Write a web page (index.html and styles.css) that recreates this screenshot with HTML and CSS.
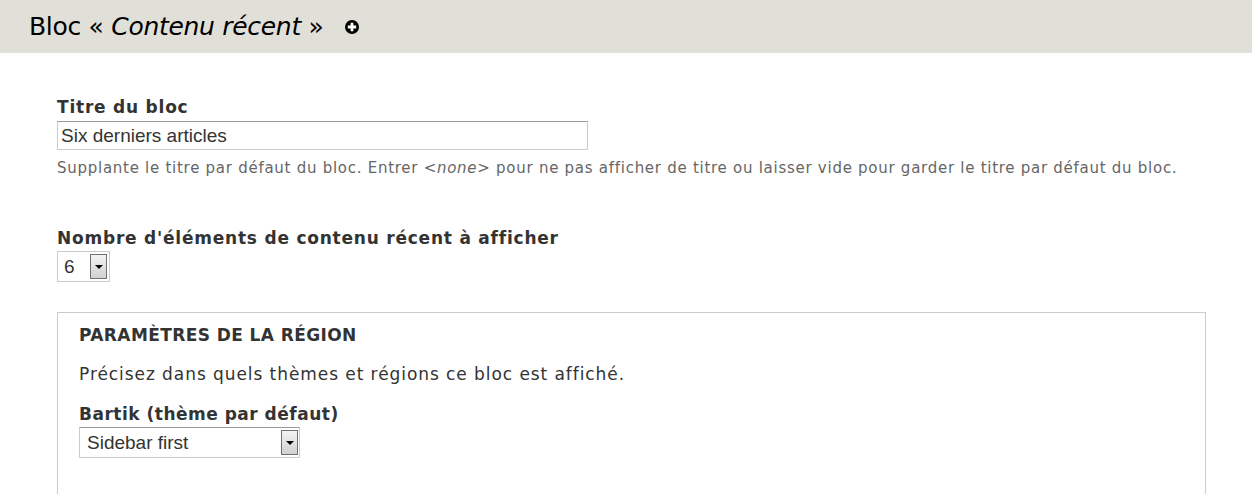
FILE: index.html
```html
<!DOCTYPE html>
<html>
<head>
    <meta charset="utf-8" />
    <title>Bloc « Contenu récent »</title>
    <link rel="stylesheet" href="styles.css">
</head>
<body>
    <div class="page-header">
        <h1>Bloc « <em>Contenu récent</em> »</h1>
        <svg class="add-icon" width="16" height="16" viewBox="0 0 16 16">
            <circle cx="8" cy="8" r="7" fill="#000" />
            <path d="M6.6 3.8h2.8v2.8h2.8v2.8H9.4v2.8H6.6V9.4H3.8V6.6h2.8z" fill="#fff" />
        </svg>
    </div>
    <form class="content">
        <div class="form-item item-title">
            <label>Titre du bloc</label>
            <input type="text" class="form-text" value="Six derniers articles" />
            <div class="description">Supplante le titre par défaut du bloc. Entrer <em>&lt;none&gt;</em> pour ne pas afficher de titre ou laisser vide pour garder le titre par défaut du bloc.</div>
        </div>
        <div class="form-item item-count">
            <label>Nombre d'éléments de contenu récent à afficher</label>
            <div class="form-select select-small">
                <span>6</span>
                <span class="arrow"></span>
            </div>
        </div>
        <fieldset class="region">
            <h2>PARAMÈTRES DE LA RÉGION</h2>
            <p>Précisez dans quels thèmes et régions ce bloc est affiché.</p>
            <label>Bartik (thème par défaut)</label>
            <div class="form-select select-wide">
                <span>Sidebar first</span>
                <span class="arrow"></span>
            </div>
        </fieldset>
    </form>
</body>
</html>
```

FILE: styles.css
```css
html, body {
    height: 100%;
    overflow: hidden;
}

body {
    margin: 0;
    background-color: #fff;
    color: #333;
    font-family: "DejaVu Sans", sans-serif;
}

.page-header {
    display: flex;
    align-items: center;
    height: 53px;
    padding-left: 29px;
    background-color: #e0e0d8;
}

h1 {
    margin: 0;
    color: #000;
    font-size: 25px;
    font-weight: normal;
    letter-spacing: -0.3px;
}

.add-icon {
    margin-left: 20px;
}

.content {
    padding: 44px 46px 0 57px;
}

label {
    display: block;
    margin-bottom: 4px;
    color: #333;
    font-size: 17px;
    font-weight: bold;
    line-height: 20px;
    letter-spacing: 0.78px;
}

.form-text {
    display: block;
    box-sizing: border-box;
    width: 531px;
    height: 29px;
    margin: 0;
    padding: 1px 3px 0;
    border: 1px solid #ccc;
    border-top-color: #999;
    color: #333;
    font-family: "Liberation Sans", sans-serif;
    font-size: 19px;
}

.description {
    margin-top: 8px;
    color: #666;
    font-size: 15px;
    line-height: 20px;
    letter-spacing: 0.73px;
}

.item-count {
    margin-top: 50px;
}

.item-count label {
    margin-bottom: 3px;
}

.form-select {
    display: flex;
    align-items: center;
    justify-content: space-between;
    box-sizing: border-box;
    padding: 0 1px 0 7px;
    border: 1px solid #ccc;
    color: #333;
    font-family: "Liberation Sans", sans-serif;
    font-size: 19px;
}

.select-small {
    width: 53px;
    height: 31px;
    padding-right: 2px;
    padding-left: 6px;
}

.select-wide {
    width: 221px;
    height: 31px;
    border-top-color: #999;
}

.arrow {
    position: relative;
    box-sizing: border-box;
    width: 17px;
    height: 25px;
    border: 1px solid #707070;
    background: linear-gradient(#f4f4f4, #d0d0d0);
}

.arrow::after {
    content: "";
    position: absolute;
    top: 10px;
    left: 3.5px;
    border-top: 4px solid #000;
    border-left: 4px solid transparent;
    border-right: 4px solid transparent;
}

.region {
    box-sizing: border-box;
    min-height: 300px;
    margin: 30px 0 0;
    padding: 10px 21px 0;
    border: 1px solid #ccc;
}

.region h2 {
    margin: 0;
    font-size: 17px;
    font-weight: bold;
    line-height: 25px;
    letter-spacing: 0.4px;
}

.region p {
    margin: 14px 0 0;
    font-size: 17px;
    line-height: 24px;
    letter-spacing: 0.93px;
}

.region label {
    margin: 18px 0 3px;
    letter-spacing: 0.5px;
}
```
